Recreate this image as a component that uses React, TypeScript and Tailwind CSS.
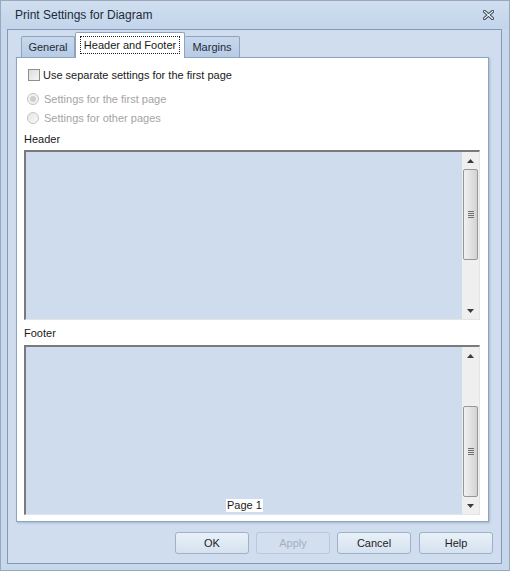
const font = { fontFamily: '"Liberation Sans", Arial, sans-serif' };

function ArrowUp() {
  return (
    <svg width="7" height="4" viewBox="0 0 7 4"><path d="M3.5 0 L7 4 L0 4 Z" fill="#3c3c3c" /></svg>
  );
}

function ArrowDown() {
  return (
    <svg width="7" height="4" viewBox="0 0 7 4"><path d="M0 0 L7 0 L3.5 4 Z" fill="#3c3c3c" /></svg>
  );
}

function Thumb({ className }: { className: string }) {
  return (
    <div className={`mx-[1px] rounded-[2px] border border-[#979797] bg-gradient-to-r from-[#f1f1f1] via-[#e3e3e3] to-[#d2d2d2] flex items-center justify-center ${className}`}>
      <div className="flex flex-col gap-[1px]">
        <div className="w-[6px] h-[1px] bg-[#6f6f6f]" />
        <div className="w-[6px] h-[1px] bg-[#6f6f6f]" />
        <div className="w-[6px] h-[1px] bg-[#6f6f6f]" />
        <div className="w-[6px] h-[1px] bg-[#6f6f6f]" />
      </div>
    </div>
  );
}

function EditBox({ thumbTop, children }: { thumbTop: number; children?: React.ReactNode }) {
  return (
    <div className="h-[170px] flex border-t-2 border-l-2 border-[#7a7a7a] border-b border-r border-b-[#e4e4e4] border-r-[#e4e4e4] bg-[#cfdcee]">
      <div className="flex-1 relative">{children}</div>
      <div className="w-[17px] bg-[#efefef] flex flex-col">
        <div className="h-[17px] flex items-center justify-center"><ArrowUp /></div>
        {thumbTop > 0 ? <div style={{ height: thumbTop }} /> : null}
        <Thumb className="h-[91px]" />
        <div className="flex-1" />
        <div className="h-[17px] flex items-center justify-center"><ArrowDown /></div>
      </div>
    </div>
  );
}

function Btn({ label, disabled }: { label: string; disabled?: boolean }) {
  return (
    <div
      className={`w-[74px] h-[22px] rounded-[3px] border flex items-center justify-center text-[11px] ${
        disabled
          ? 'border-[#b9c8dc] bg-[#d3dfee] text-[#a3afbf]'
          : 'border-[#9fb1c9] bg-gradient-to-b from-[#e9f0f8] to-[#d6e2f0] text-[#1e1e1e]'
      }`}
    >
      {label}
    </div>
  );
}

export default function App() {
  return (
    <div style={font} className="w-[510px] h-[571px] bg-[#c7d8ec] border border-[#98a9bf] flex flex-col text-[11px] text-[#1a1a1a]">
      <div className="h-[28px] flex items-center justify-between pl-[14px] pr-[15px] bg-gradient-to-b from-[#d0def0] to-[#c3d5eb]">
        <div className="text-[12px] text-[#1e2a3a]">Print Settings for Diagram</div>
        <svg width="11" height="10" viewBox="0 0 11 10">
          <path d="M1.5 1.5 L9.5 8.5 M9.5 1.5 L1.5 8.5" stroke="#3d4a5c" strokeWidth="3.2" strokeLinecap="square" />
          <path d="M1.5 1.5 L9.5 8.5 M9.5 1.5 L1.5 8.5" stroke="#f4f6f9" strokeWidth="1.2" strokeLinecap="square" />
        </svg>
      </div>
      <div className="ml-[6px] mr-[7px] h-[535px] border border-[#8599b5] bg-[#cfddef] flex flex-col">
        <div className="h-[27px] flex items-end pl-[13px] relative z-10">
          <div className="h-[21px] w-[54px] border border-b-0 border-[#8ea3c0] bg-gradient-to-b from-[#c8d8ec] to-[#b6cbe4] rounded-t-[2px] flex items-center justify-center text-[#1e2a3a]">General</div>
          <div className="w-[110px] border border-b-0 border-[#8ea3c0] bg-white rounded-t-[2px] flex items-start justify-center pt-[3px] -mb-[1px] h-[26px]">
            <span className="border border-dotted border-[#222] px-[3px] leading-[16px]">Header and Footer</span>
          </div>
          <div className="h-[21px] w-[55px] border border-b-0 border-l-0 border-[#8ea3c0] bg-gradient-to-b from-[#c8d8ec] to-[#b6cbe4] rounded-t-[2px] flex items-center justify-center text-[#1e2a3a]">Margins</div>
        </div>
        <div className="ml-[8px] mr-[12px] h-[465px] border border-[#8ea3c0] bg-white shadow-[1px_1px_2px_rgba(90,110,140,0.35)] flex flex-col px-[7px] pr-[8px]">
          <div className="mt-[10px] h-[14px] flex items-center gap-[3px] pl-[4px]">
            <div className="w-[12px] h-[12px] border border-[#8e8f8f] bg-gradient-to-br from-[#dcdcdc] to-[#f6f6f6]" />
            <span>Use separate settings for the first page</span>
          </div>
          <div className="mt-[10px] h-[14px] flex items-center gap-[5px] pl-[3px] text-[#a4a4a4]">
            <div className="w-[12px] h-[12px] rounded-full border border-[#c4c4c4] bg-[#f2f2f2] flex items-center justify-center">
              <div className="w-[6px] h-[6px] rounded-full bg-[#cfcfcf]" />
            </div>
            <span>Settings for the first page</span>
          </div>
          <div className="mt-[5px] h-[14px] flex items-center gap-[5px] pl-[3px] text-[#a4a4a4]">
            <div className="w-[12px] h-[12px] rounded-full border border-[#c4c4c4] bg-gradient-to-br from-[#e6e6e6] to-[#f8f8f8]" />
            <span>Settings for other pages</span>
          </div>
          <div className="mt-[7px] h-[14px] flex items-center">Header</div>
          <div className="mt-[4px]">
            <EditBox thumbTop={0} />
          </div>
          <div className="mt-[6px] h-[14px] flex items-center">Footer</div>
          <div className="mt-[5px]">
            <EditBox thumbTop={42}>
              <div className="absolute left-[200px] bottom-[2px] bg-white px-[1px] leading-[13px]">Page 1</div>
            </EditBox>
          </div>
        </div>
        <div className="mt-[10px] flex gap-[7px] pl-[167px]">
          <Btn label="OK" />
          <Btn label="Apply" disabled />
          <Btn label="Cancel" />
          <div className="ml-[1px]"><Btn label="Help" /></div>
        </div>
      </div>
    </div>
  );
}
